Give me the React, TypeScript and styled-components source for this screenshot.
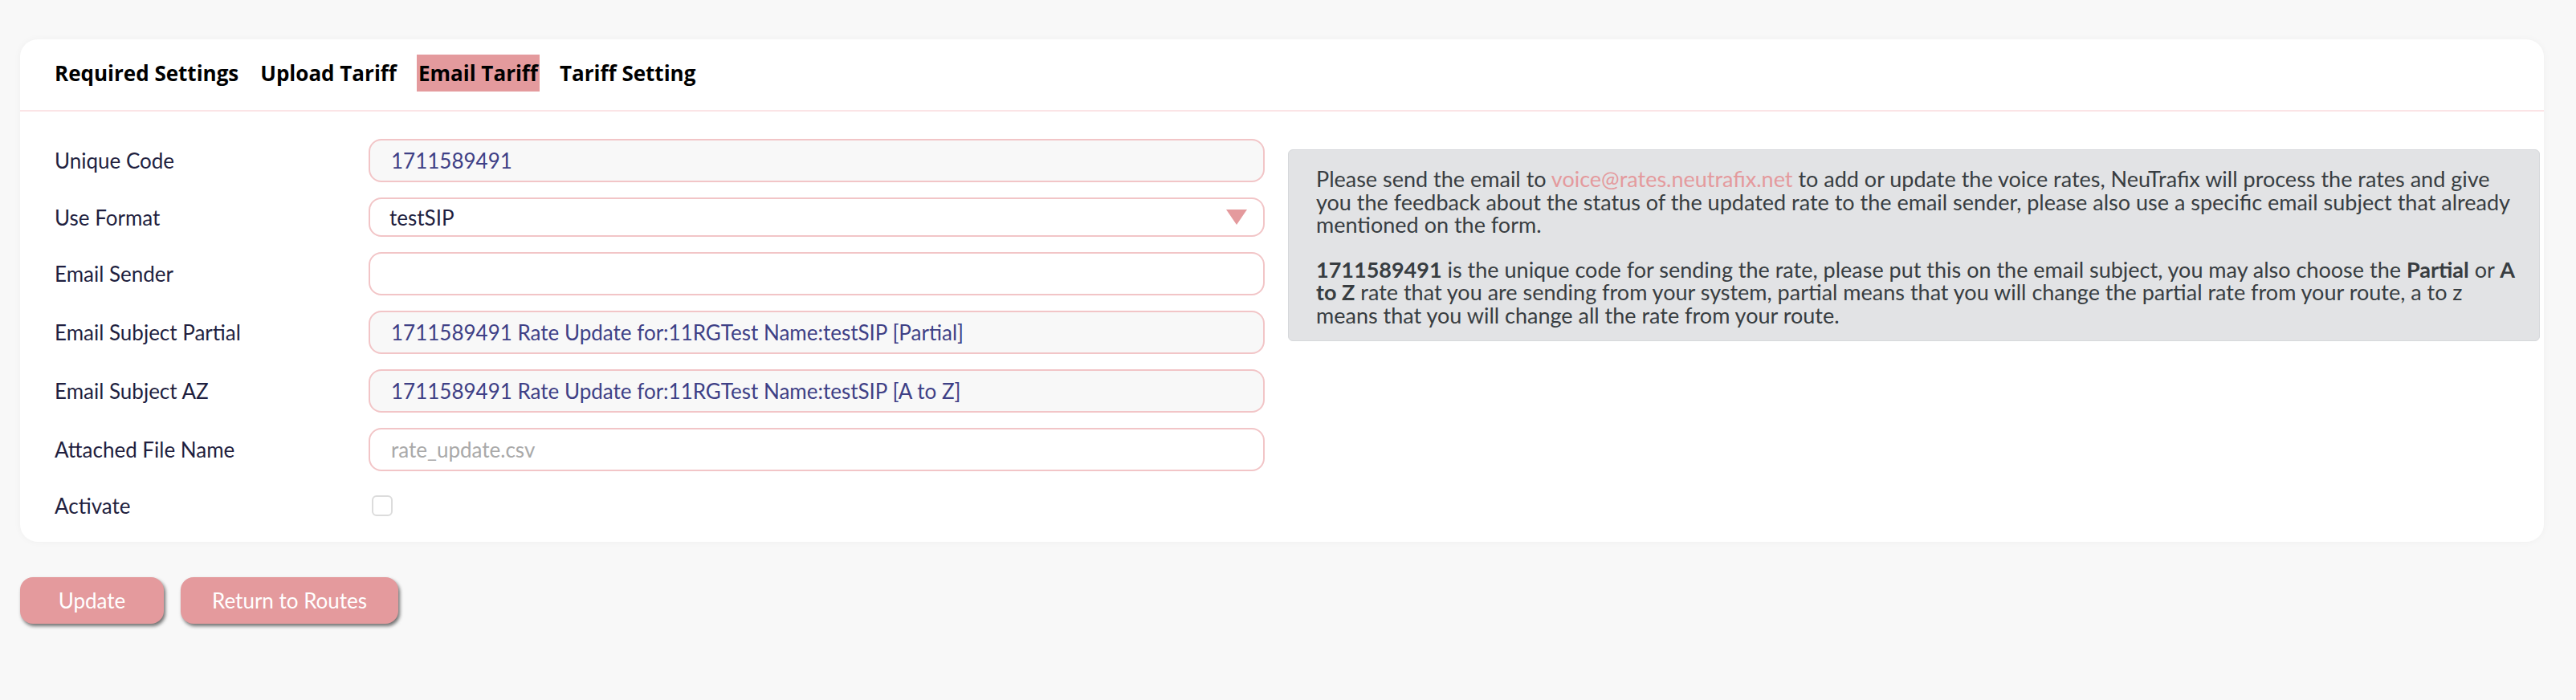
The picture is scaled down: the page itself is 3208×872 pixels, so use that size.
import React from 'react'
import styled, { createGlobalStyle } from 'styled-components'

const Global = createGlobalStyle`
  html, body {
    margin:0;
    padding:0;
    background:#f8f8f8;
    font-family:Lato, "Noto Sans", sans-serif;
  }
`

const Page = styled.div`
  min-height:872px;
  padding:49px 40px 0 25px;
  box-sizing:border-box;
`

const Card = styled.section`
  background:white;
  border-radius:22px;
  box-shadow:0 0 10px rgba(0,0,0,0.04);
`

const Tabs = styled.nav`
  display:flex;
  align-items:center;
  gap:23px;
  padding:19px 43px 23px 41px;
  border-bottom:2px solid #fbe4e6;
`

const Tab = styled.span<{ $active?: boolean }>`
  font-family:"Open Sans", sans-serif;
  font-weight:700;
  font-size:26px;
  line-height:46px;
  padding:0 2px;
  color:#000;
  background:${p => (p.$active ? '#e49a9d' : 'transparent')};
`

const Body = styled.div`
  display:grid;
  grid-template-columns:1507fr 1559fr;
  column-gap:29px;
  align-items:start;
  padding:34px 5px 21px 43px;
`

const Form = styled.form`
  display:grid;
  grid-template-columns:391px 1fr;
  row-gap:19px;
  align-items:center;
`

const Label = styled.label`
  font-size:26px;
  color:#1f1f3f;
`

const Input = styled.input<{ $readonly?: boolean }>`
  box-sizing:border-box;
  width:100%;
  height:54px;
  padding:0 26px;
  border:2px solid #f2c5c7;
  border-radius:16px;
  background:${p => (p.$readonly ? '#f8f8f8' : 'white')};
  font-family:Lato, sans-serif;
  font-size:26px;
  color:#3e4086;
  outline:none;
  &::placeholder { color:#a9a9a9; }
`

const SelectWrap = styled.div`
  position:relative;
`

const Select = styled.select`
  box-sizing:border-box;
  width:100%;
  height:49px;
  padding:0 24px;
  border:2px solid #f2c5c7;
  border-radius:16px;
  background:white;
  appearance:none;
  font-family:Lato, sans-serif;
  font-size:26px;
  color:#1f1f3f;
  outline:none;
`

const Arrow = styled.svg`
  position:absolute;
  right:22px;
  top:15px;
  pointer-events:none;
`

const CheckRow = styled.div`
  height:48px;
  display:flex;
  align-items:center;
`

const Check = styled.input`
  appearance:none;
  margin:0 0 0 4px;
  width:26px;
  height:26px;
  border:2px solid #dcdcdc;
  border-radius:6px;
  background:white;
`

const Info = styled.div`
  margin-top:13px;
  padding:22px 26px 17px 34px;
  background:#e2e3e5;
  border:1px solid #d6d8db;
  border-radius:6px;
  color:#383d41;
  font-size:27px;
  line-height:28.5px;
  p { margin:0; }
  p + p { margin-top:27px; }
  a { color:#e49a9d; text-decoration:none; }
`

const Actions = styled.div`
  display:flex;
  gap:21px;
  margin-top:44px;
`

const Button = styled.button`
  height:58px;
  min-width:179px;
  padding:0 39px;
  border:none;
  border-radius:16px;
  background:#e49a9d;
  color:white;
  font-family:Lato, sans-serif;
  font-size:26px;
  box-shadow:2px 3px 4px rgba(0,0,0,0.55);
`

const fields = [
  { label: 'Unique Code', value: '1711589491', readonly: true },
  { label: 'Use Format', select: true },
  { label: 'Email Sender', value: '' },
  { label: 'Email Subject Partial', value: '1711589491 Rate Update for:11RGTest Name:testSIP [Partial]', readonly: true },
  { label: 'Email Subject AZ', value: '1711589491 Rate Update for:11RGTest Name:testSIP [A to Z]', readonly: true },
  { label: 'Attached File Name', value: '', placeholder: 'rate_update.csv' },
]

export default function App() {
  return (
    <Page>
      <Global />
      <Card>
        <Tabs>
          <Tab>Required Settings</Tab>
          <Tab>Upload Tariff</Tab>
          <Tab $active>Email Tariff</Tab>
          <Tab>Tariff Setting</Tab>
        </Tabs>
        <Body>
          <Form onSubmit={e => e.preventDefault()}>
            {fields.map(f => (
              <React.Fragment key={f.label}>
                <Label>{f.label}</Label>
                {f.select ? (
                  <SelectWrap>
                    <Select defaultValue="testSIP">
                      <option value="testSIP">testSIP</option>
                    </Select>
                    <Arrow width="26" height="19" viewBox="0 0 26 19">
                      <path d="M0 0 H26 L13 19 Z" fill="#e49a9d" />
                    </Arrow>
                  </SelectWrap>
                ) : (
                  <Input
                    $readonly={f.readonly}
                    readOnly={f.readonly}
                    defaultValue={f.value}
                    placeholder={f.placeholder}
                  />
                )}
              </React.Fragment>
            ))}
            <Label>Activate</Label>
            <CheckRow>
              <Check type="checkbox" />
            </CheckRow>
          </Form>
          <Info>
            <p>
              Please send the email to <a href="#">voice@rates.neutrafix.net</a> to add or update the voice
              rates, NeuTrafix will process the rates and give you the feedback about the status of the
              updated rate to the email sender, please also use a specific email subject that already
              mentioned on the form.
            </p>
            <p>
              <b>1711589491</b> is the unique code for sending the rate, please put this on the email subject,
              you may also choose the <b>Partial</b> or <b>A to Z</b> rate that you are sending from your
              system, partial means that you will change the partial rate from your route, a to z means that
              you will change all the rate from your route.
            </p>
          </Info>
        </Body>
      </Card>
      <Actions>
        <Button>Update</Button>
        <Button>Return to Routes</Button>
      </Actions>
    </Page>
  )
}
